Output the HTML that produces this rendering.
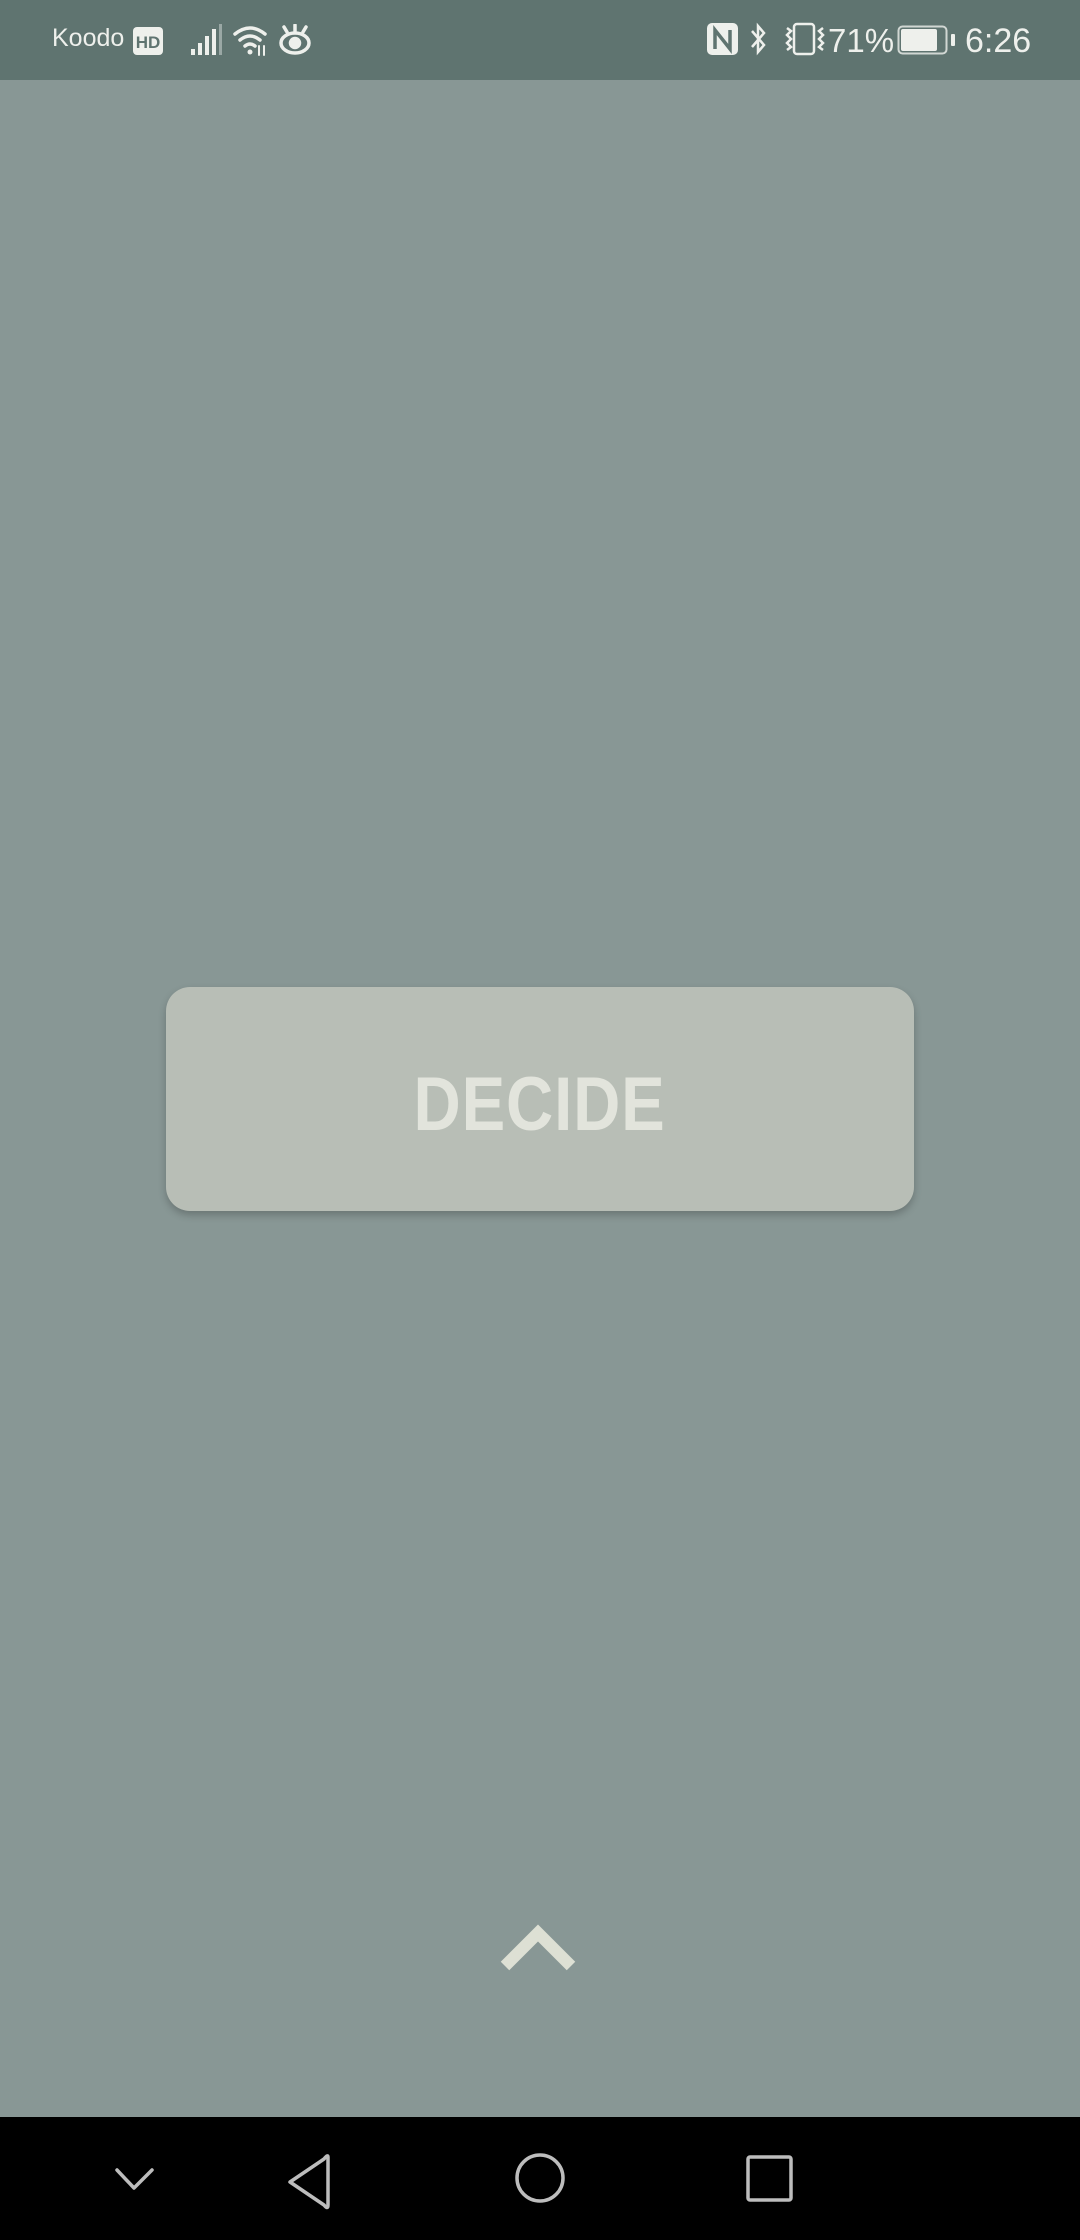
<!DOCTYPE html>
<html><head><meta charset="utf-8">
<style>
html,body{margin:0;padding:0}
body{width:1080px;height:2240px;position:relative;overflow:hidden;background:#889795;font-family:"Liberation Sans",sans-serif}
.sb{position:absolute;left:0;top:0;width:1080px;height:80px;background:#5f7470}
.t{position:absolute;color:#eef0ec;white-space:nowrap}
.btn{position:absolute;left:166px;top:987px;width:748px;height:224px;border-radius:24px;background:#b8beb6;box-shadow:0 4px 8px rgba(0,0,0,0.22);display:flex;align-items:center;justify-content:center;color:#e2e4dc;font-weight:bold;font-size:76px;letter-spacing:1px}
.btn span{display:inline-block;transform:scaleX(0.86);position:relative;top:5px}
.nav{position:absolute;left:0;top:2117px;width:1080px;height:123px;background:#000}
</style></head><body>
<div class="sb">
  <div class="t" style="left:52px;top:24px;font-size:25px">Koodo</div>
  <svg style="position:absolute;left:133px;top:27px" width="30" height="28" viewBox="0 0 30 28"><rect x="0" y="0" width="30" height="28" rx="4" fill="#eef0ec"/><text x="15" y="21" font-family="Liberation Sans" font-weight="bold" font-size="17" text-anchor="middle" fill="#5f7470">HD</text></svg>
  <svg style="position:absolute;left:189px;top:24px" width="36" height="32" viewBox="0 0 36 32" fill="#eef0ec"><rect x="2" y="25" width="4" height="6"/><rect x="9" y="19" width="4" height="12"/><rect x="16" y="12" width="4" height="19"/><rect x="23" y="5" width="4" height="26"/><rect x="30" y="0" width="3" height="31" fill="#9aa8a5"/></svg>
  <svg style="position:absolute;left:232px;top:24px" width="38" height="32" viewBox="0 0 38 32" fill="none" stroke="#eef0ec" stroke-width="3.5" stroke-linecap="round"><path d="M3 10 Q18 -2 33 10"/><path d="M8 16 Q18 8 28 16"/><path d="M13 22 Q18 18 23 22"/><circle cx="18" cy="28" r="2.5" fill="#eef0ec" stroke="none"/><path d="M27 22 v9 M32 22 v9" stroke-width="2"/></svg>
  <svg style="position:absolute;left:278px;top:24px" width="34" height="32" viewBox="0 0 34 32" fill="none" stroke="#eef0ec" stroke-width="3.5"><ellipse cx="17" cy="19" rx="14" ry="10"/><circle cx="17" cy="19" r="4.5" fill="#eef0ec"/><path d="M17 1v6M6 3l3 5M28 3l-3 5" stroke-linecap="round"/></svg>

  <svg style="position:absolute;left:707px;top:23px" width="31" height="32" viewBox="0 0 31 32"><rect x="0" y="0" width="31" height="32" rx="5" fill="#eef0ec"/><path d="M8 26V7l15 19V7" stroke="#5f7470" stroke-width="3.5" fill="none"/></svg>
  <svg style="position:absolute;left:750px;top:22px" width="16" height="34" viewBox="0 0 16 34" fill="none" stroke="#eef0ec" stroke-width="2.5"><path d="M2 9l12 14-6 7V4l6 7L2 25"/></svg>
  <svg style="position:absolute;left:779px;top:22px" width="52" height="34" viewBox="0 0 52 34" fill="none" stroke="#eef0ec" stroke-width="2.5"><rect x="15" y="2" width="20" height="30" rx="3"/><path d="M8 6l4 3-4 4 4 4-4 4 4 4-4 3"/><path d="M44 6l-4 3 4 4-4 4 4 4-4 4 4 3"/></svg>
  <div class="t" style="left:828px;top:22px;font-size:33px">71%</div>
  <svg style="position:absolute;left:897px;top:25px" width="60" height="30" viewBox="0 0 60 30"><rect x="1.5" y="1.5" width="48" height="27" rx="4" fill="none" stroke="#eef0ec" stroke-width="2" opacity="0.8"/><rect x="4" y="4" width="36" height="22" rx="2" fill="#eef0ec"/><rect x="54" y="9" width="4" height="12" rx="1" fill="#eef0ec"/></svg>
  <div class="t" style="left:965px;top:22px;font-size:34px">6:26</div>
</div>

<div class="btn"><span>DECIDE</span></div>

<svg style="position:absolute;left:490px;top:1915px" width="100" height="70" viewBox="490 1915 100 70"><polyline points="505,1966 538,1933 571,1966" fill="none" stroke="#dde0d4" stroke-width="12"/></svg>

<div class="nav">
  <svg style="position:absolute;left:0;top:0" width="1080" height="123" viewBox="0 2117 1080 123" fill="none" stroke="#bdbdbd" stroke-width="3.5" stroke-linejoin="round" stroke-linecap="round">
    <polyline points="117,2170 134,2188 152,2170"/>
    <path d="M328,2157 L328,2205 Q328,2210 324,2205 L290,2182 L324,2159 Q328,2154 328,2157 Z"/>
    <circle cx="540" cy="2178" r="23"/>
    <rect x="748" y="2157" width="43" height="43" rx="2"/>
  </svg>
</div>
</body></html>
